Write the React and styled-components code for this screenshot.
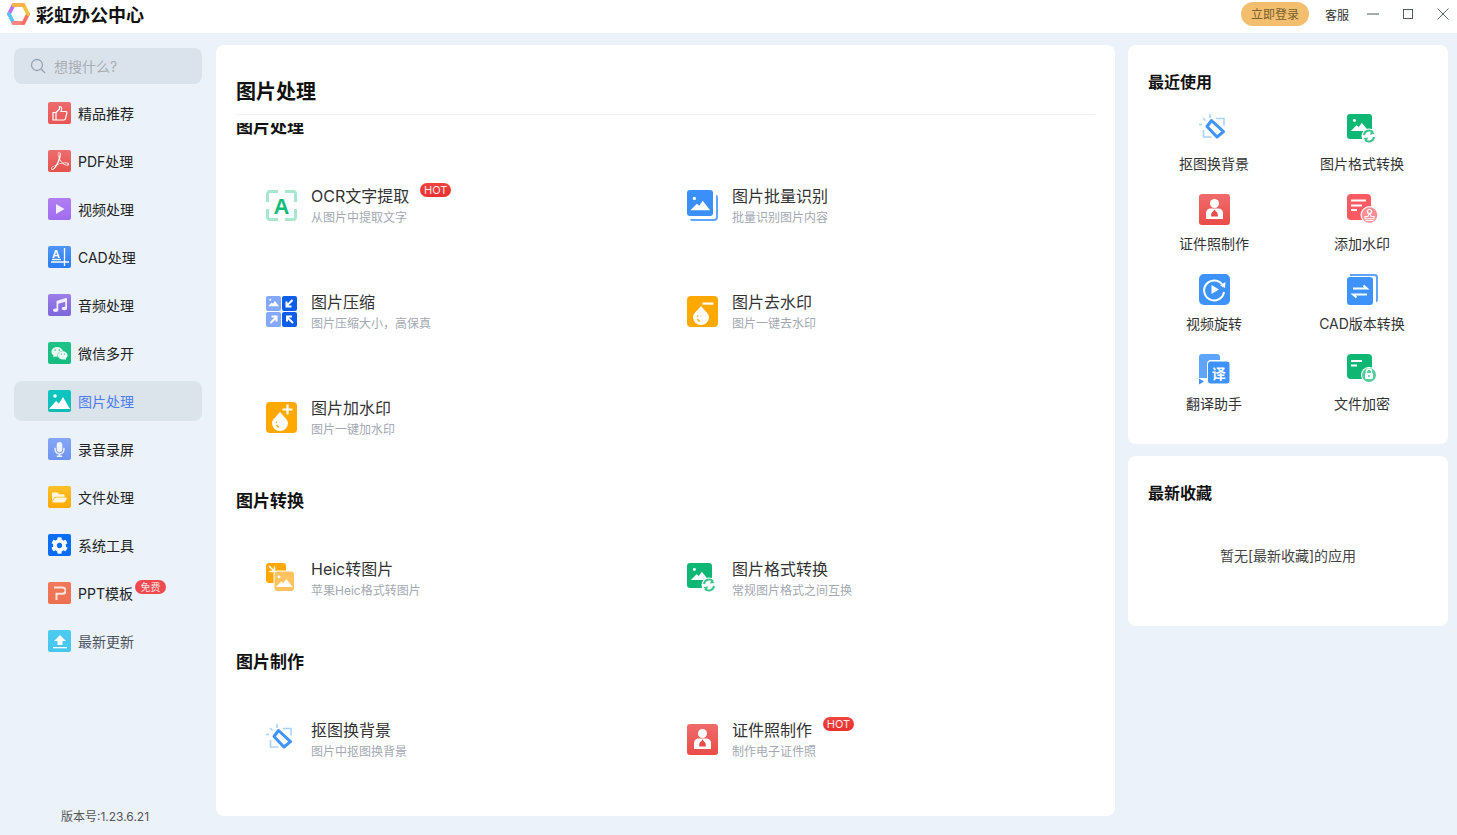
import React from 'react';
import styled, { createGlobalStyle } from 'styled-components';
import { FaWeixin, FaMusic, FaMicrophone, FaFolderOpen, FaCog } from 'react-icons/fa';
import { SiAdobeacrobatreader } from 'react-icons/si';

const FONT = `Inter, "Noto Sans CJK SC", "Microsoft YaHei", "Noto Sans", sans-serif`;

const Global = createGlobalStyle`
  html, body { margin: 0; padding: 0; background: #ebf2fa; }
  * { box-sizing: border-box; }
  body { font-family: ${FONT}; }
`;

const Page = styled.div`
  width: 1457px; height: 835px; display: flex; flex-direction: column; overflow: hidden; background: #ebf2fa;
`;
const TitleBar = styled.header`
  height: 33px; background: #fff; display: flex; align-items: center; padding: 0 0 6px 7px; flex: none;
`;
const LogoText = styled.div`
  margin: 4px 0 0 6px; font-size: 18px; font-weight: 700; color: #111; line-height: 27px;
`;
const TitleRight = styled.div`
  margin-left: auto; display: flex; align-items: center; height: 100%;
`;
const Login = styled.button`
  width: 68px; height: 24px; margin-top: 1px; border: 0; border-radius: 12px; background: #f3be6d; color: #77612f;
  font: 12px/22px ${FONT}; padding: 2px 0 0;
`;
const Service = styled.span`
  margin: 4px 0 0 16px; font-size: 12px; color: #333; line-height: 20px;
`;
const WinBtn = styled.div`
  width: 12px; height: 12px; display: flex; margin-left: ${p => p.$ml}px; margin-right: ${p => p.$mr || 0}px;
  svg { width: 12px; height: 12px; display: block; }
`;

const Body = styled.div`
  flex: 1; display: flex; min-height: 0; padding-left: 14px;
`;
const Sidebar = styled.aside`
  width: 188px; flex: none; display: flex; flex-direction: column; padding-top: 15px;
`;
const Search = styled.div`
  height: 36px; background: #dae3ec; border-radius: 8px; display: flex; align-items: center; padding-left: 16px; gap: 8px;
  color: #a9adb3; font-size: 14px; margin-bottom: 5px;
  svg { display: block; }
`;
const Nav = styled.nav`
  display: flex; flex-direction: column;
`;
const NavItem = styled.div`
  height: 40px; margin: 4px 0; border-radius: 8px; display: flex; align-items: center; padding-left: 34px; gap: 7px;
  background: ${p => (p.$active ? '#dbe3eb' : 'transparent')};
  color: ${p => (p.$active ? '#4d7cf0' : p.$muted ? '#4d5560' : '#222')};
  font-size: 14px; line-height: 20px;
  > span { padding-top: 2px; }
`;
const SideTile = styled.div`
  width: 23px; height: 22px; border-radius: 2px; flex: none; background: linear-gradient(180deg, ${p => p.$from}, ${p => p.$to});
  display: flex; align-items: center; justify-content: center; color: #fff;
  svg { display: block; }
`;
const FreeBadge = styled.em`
  font-style: normal; width: 31px; height: 14px; border-radius: 7px; background: #ee4a4f; color: #fde3e3; font-size: 10px;
  line-height: 14px; text-align: center; margin: -12px 0 0 -5px;
`;
const Version = styled.div`
  margin-top: auto; text-align: center; font-size: 12px; line-height: 20px; color: #555; padding: 0 6px 8px 0;
`;

const Main = styled.main`
  width: 899px; height: 771px; margin: 12px 0 0 14px; background: #fff; border-radius: 8px; padding: 0 20px; display: flex; flex-direction: column; flex: none;
`;
const MainHeader = styled.div`
  height: 70px; flex: none; border-bottom: 1px solid #f0f0f0; padding-top: 32px; font-size: 20px; line-height: 30px; font-weight: 700; color: #111;
`;
const Scroller = styled.div`
  margin-top: 8px; flex: 1; overflow: hidden; min-height: 0;
`;
const ScrollInner = styled.div`
  margin-top: -26px;
`;
const SectionTitle = styled.h3`
  margin: 0; height: ${p => (p.$first ? 56 : 55)}px; display: flex; align-items: center; padding-top: ${p => (p.$first ? 3 : 4)}px;
  font-size: 17px; font-weight: 700; color: #111; line-height: 24px;
`;
const ItemGrid = styled.div`
  display: grid; grid-template-columns: 421px 421px; grid-auto-rows: 106px; padding-left: 30px;
`;
const IconBox = styled.div`
  width: 31px; height: 31px; flex: none;
  svg { display: block; width: 31px; height: 31px; overflow: visible; }
`;
const Item = styled.div`
  display: flex; align-items: center; gap: 14px;
  ${IconBox} { margin-top: -1px; }
`;
const ItemText = styled.div`
  margin-top: 2px;
`;
const ItemTitleRow = styled.div`
  display: flex; align-items: flex-start;
`;
const ItemTitle = styled.div`
  font-size: 16px; line-height: 20px; color: #333;
`;
const HotBadge = styled.em`
  font-style: normal; width: 31px; height: 14px; border-radius: 7px; background: linear-gradient(180deg, #f0443f, #e8302f); color: #ffe9e9;
  font: 11px/14px ${FONT}; text-align: center; margin: -3px 0 0 11px;
`;
const ItemSub = styled.div`
  font-size: 12px; line-height: 20px; margin-top: 2px; color: #a3a9b3;
`;

const Right = styled.aside`
  width: 320px; margin: 12px 0 0 13px; flex: none; display: flex; flex-direction: column; gap: 12px;
`;
const Card = styled.section`
  background: #fff; border-radius: 8px; padding: 25px 12px 10px; height: ${p => p.$h}px;
`;
const CardTitle = styled.h3`
  margin: 0; padding-left: 8px; font-size: 16px; font-weight: 700; line-height: 24px; color: #111;
`;
const RecentGrid = styled.div`
  margin-top: 20px; display: grid; grid-template-columns: 1fr 1fr; grid-auto-rows: 80px;
`;
const RecentCell = styled.div`
  display: flex; flex-direction: column; align-items: center; gap: 9px; font-size: 14px; line-height: 20px; color: #333;
`;
const Empty = styled.div`
  margin-top: 41px; text-align: center; font-size: 14px; line-height: 20px; color: #444;
`;

/* Drawings */
const Logo = () => (
  <svg width="23" height="22" viewBox="0 0 23 22" fill="none" strokeWidth="3.800" strokeLinecap="round">
    <path d="M6.500 2 2 11" stroke="#c46ee6" />
    <path d="M2 11 6.500 20" stroke="#5cc0f0" />
    <path d="M6.500 20H16.500" stroke="#f5857f" />
    <path d="M16.500 20 21 11" stroke="#f56f62" />
    <path d="M21 11 16.500 2" stroke="#f9c33f" />
    <path d="M6.500 2H16.500" stroke="#f7b24d" />
  </svg>
);

const Mountain = ({ x = 0, y = 0, s = 1, fill = '#fff' }) => (
  <g transform={`translate(${x} ${y}) scale(${s})`} fill={fill}>
    <circle cx="5" cy="4" r="1.700" />
    <path d="M1 16 7.500 9.500 10 11.500 13.500 6.500 21 16z" />
  </g>
);
const Drop = () => (
  <g>
    <path d="M14 10c4.300 5 8 8 8 11a8 8 0 0 1-16 0c0-3 3.700-6 8-11z" fill="#fff" />
    <path d="M10.500 19.500v1.500M10.500 23c.4 1.200 1.200 2 2.500 2.500" stroke="#ffa800" strokeWidth="1.300" fill="none" />
  </g>
);
const Sync = ({ cx = 22, cy = 22 }) => (
  <g>
    <circle cx={cx} cy={cy} r="7.500" fill="#fff" />
    <path d={`M${cx - 5} ${cy - 1}a5.200 5.200 0 0 1 9-2.800`} stroke="#3dc48c" strokeWidth="2" fill="none" />
    <path d={`M${cx + 2.500} ${cy - 6}l3 4-4.500 .5z`} fill="#3dc48c" />
    <path d={`M${cx + 5} ${cy + 1}a5.200 5.200 0 0 1-9 2.800`} stroke="#3dc48c" strokeWidth="2" fill="none" />
    <path d={`M${cx - 2.500} ${cy + 6}l-3-4 4.500-.5z`} fill="#3dc48c" />
  </g>
);

const OcrIcon = () => (
  <svg viewBox="0 0 31 31">
    <path d="M1.500 12V4A2.500 2.500 0 0 1 4 1.500h8M19 1.500h8A2.500 2.500 0 0 1 29.500 4v8M29.500 19v8a2.500 2.500 0 0 1-2.500 2.500h-8M12 29.500H4A2.500 2.500 0 0 1 1.500 27v-8" fill="none" stroke="#a6e7cd" strokeWidth="3" />
    <text x="15.500" y="23.500" textAnchor="middle" fontFamily="'Liberation Sans',sans-serif" fontWeight="700" fontSize="22" fill="#12bd7c">A</text>
  </svg>
);
const CompressIcon = () => (
  <svg viewBox="0 0 31 31">
    <rect x="0" y="0" width="15" height="15" rx="2" fill="#84a8fb" />
    <Mountain x="1.500" y="1.500" s=".55" />
    <rect x="16" y="0" width="15" height="15" rx="2" fill="#0f5eea" />
    <path d="M26.500 4 20.500 10M20.500 5.500V10.500H25.500" stroke="#fff" strokeWidth="2" fill="none" />
    <rect x="0" y="16" width="15" height="15" rx="2" fill="#84a8fb" />
    <path d="M4.500 27 10.500 21M5.500 20.500H10.500V25.500" stroke="#fff" strokeWidth="2" fill="none" />
    <rect x="16" y="16" width="15" height="15" rx="2" fill="#0f5eea" />
    <path d="M27 27 21 21M21 25.500V20.500H26" stroke="#fff" strokeWidth="2" fill="none" />
  </svg>
);
const BatchIcon = () => (
  <svg viewBox="0 0 31 31">
    <path d="M29 5a2 2 0 0 1 2 2v20a4 4 0 0 1-4 4H5a2 2 0 0 1-2-2h24a2 2 0 0 0 2-2z" fill="#5ea5fb" />
    <rect x="0" y="0" width="26" height="26" rx="3" fill="#3a90f8" />
    <Mountain x="2.500" y="4.500" s=".98" />
  </svg>
);
const TileOrange = ({ children }) => (
  <svg viewBox="0 0 31 31">
    <rect width="31" height="31" rx="4" fill="#ffa800" />
    {children}
  </svg>
);
const RemoveWmIcon = () => (
  <TileOrange><Drop /><rect x="15.500" y="6.500" width="11" height="2.200" fill="#fff" /></TileOrange>
);
const AddWmIcon = () => (
  <TileOrange><Drop /><path d="M16.500 7.500h10M21.500 2.500v10" stroke="#fff" strokeWidth="2.200" /></TileOrange>
);
const HeicIcon = () => (
  <svg viewBox="0 0 31 31">
    <rect x="0" y="0" width="20" height="20" rx="3" fill="#ffa800" />
    <path d="M3 3 8.500 8.500M3.500 8.500H8.500V3.500" stroke="#fff" strokeWidth="1.500" fill="none" />
    <rect x="7.500" y="7.500" width="21" height="21" rx="3.500" fill="#fff" />
    <rect x="8.500" y="8.500" width="19.500" height="19.500" rx="3" fill="#ffc25e" />
    <Mountain x="8.800" y="10.500" s=".85" />
  </svg>
);
const FormatIcon = () => (
  <svg viewBox="0 0 31 31">
    <rect x="0" y="0" width="25" height="25" rx="3" fill="#0fb774" />
    <Mountain x="3" y="3" s=".88" />
    <Sync />
  </svg>
);
const CutoutIcon = () => (
  <svg viewBox="0 0 31 31">
    <path d="M11 0v4M0 10.500h3M4 4l2.500 2.500" stroke="#a9d2fe" strokeWidth="1.600" fill="none" />
    <path d="M17 4.500h8v7M4.500 16v7h8" stroke="#a9d2fe" strokeWidth="1.600" fill="none" />
    <path d="M12.500 6.500 24.500 17.700 18 23 8 12.500z" fill="none" stroke="#3f94fb" strokeWidth="3" strokeLinejoin="round" />
  </svg>
);
const IdIcon = () => (
  <svg viewBox="0 0 31 31">
    <defs><linearGradient id="idg" x1="0" y1="0" x2="0" y2="1"><stop offset="0" stopColor="#ef6b6b" /><stop offset="1" stopColor="#ea4d48" /></linearGradient></defs>
    <rect width="31" height="31" rx="3" fill="url(#idg)" />
    <circle cx="15.500" cy="9.500" r="4.500" fill="#fff" />
    <path d="M7 25V19a4.500 4.500 0 0 1 4.500-4.500h8A4.500 4.500 0 0 1 24 19v6z" fill="#fff" />
    <path d="M15.500 15.500l1.500 2a3.500 3.500 0 0 1 1.800 3.200v1.800h-6.600v-1.800a3.500 3.500 0 0 1 1.800-3.200z" fill="#ea4d48" />
  </svg>
);
const WatermarkIcon = () => (
  <svg viewBox="0 0 31 31">
    <rect width="24" height="26" rx="4" fill="#fb5a63" />
    <path d="M4 6.500h15M4 11.500h11M4 16h6" stroke="#fff" strokeWidth="1.800" />
    <circle cx="22.500" cy="21" r="9" fill="#fff" />
    <circle cx="22.500" cy="21" r="7.800" fill="#fc8e94" />
    <circle cx="22.500" cy="17.500" r="2" fill="none" stroke="#fff" strokeWidth="1.200" />
    <path d="M18 24.800h9v-2.300h-3l-1-2.500h-1l-1 2.500h-3zM18.500 26.500h8" fill="none" stroke="#fff" strokeWidth="1.100" />
  </svg>
);
const VideoRotateIcon = () => (
  <svg viewBox="0 0 31 31">
    <rect width="31" height="31" rx="5" fill="#3d93fb" />
    <path d="M24.500 13a10 10 0 1 0 .5 5" fill="none" stroke="#fff" strokeWidth="2" />
    <path d="M21 11.500 26 14l.5-6z" fill="#fff" />
    <path d="M12.500 11 20 15.500 12.500 20z" fill="#fff" />
  </svg>
);
const CadConvertIcon = () => (
  <svg viewBox="0 0 31 31">
    <path d="M3 0h25a3 3 0 0 1 3 3v23a3 3 0 0 1-2 2.500V3.500A1.500 1.500 0 0 0 27.500 2H3z" fill="#5ea5fb" />
    <rect x="6" y="0" width="23" height="2" fill="#5ea5fb" />
    <rect x="0" y="3" width="26" height="28" rx="3" fill="#3d93fb" />
    <path d="M6 14.500h14l-3.500-3M20 20.500H6l3.500 3" fill="none" stroke="#fff" strokeWidth="1.900" />
  </svg>
);
const TranslateIcon = () => (
  <svg viewBox="0 0 31 31">
    <path d="M3 0h15a3 3 0 0 1 3 3v3H12a4 4 0 0 0-4 4v14H0V3a3 3 0 0 1 3-3z" fill="#5ea5fb" />
    <path d="M0 24.500 5 27.500 0 30.500z" fill="#3d93fb" />
    <rect x="8.500" y="7" width="22.500" height="23" rx="3" fill="#3d93fb" stroke="#fff" strokeWidth="1" />
    <text x="19.800" y="24.500" textAnchor="middle" fontFamily="'Noto Sans CJK SC',sans-serif" fontSize="14" fontWeight="700" fill="#fff">译</text>
  </svg>
);
const EncryptIcon = () => (
  <svg viewBox="0 0 31 31">
    <rect width="25" height="25" rx="4" fill="#0fb774" />
    <path d="M4 7h11M4 11.500h6" stroke="#fff" strokeWidth="1.900" />
    <circle cx="22" cy="21" r="8" fill="#fff" />
    <circle cx="22" cy="21" r="7" fill="#54cd9c" />
    <path d="M19.500 19v-1.500a2.500 2.500 0 0 1 5 0V19" stroke="#fff" strokeWidth="1.300" fill="none" />
    <rect x="18" y="19" width="8" height="6" rx="1" fill="#fff" />
    <circle cx="22" cy="22" r="1" fill="#54cd9c" />
  </svg>
);

const sideIcons = {
  thumb: <svg width="16" height="16" viewBox="0 0 16 16" fill="none" stroke="#fff" strokeWidth="1.200"><path d="M1 7.500h3v7.500H1zM4 7.500 7.500 4V1.500c1.800 0 2.500 1.500 2 3L9 6.500h4.700c.8 0 1.300.7 1.100 1.500l-1.300 5.700c-.2.800-.8 1.300-1.600 1.300H4" /></svg>,
  pdf: <SiAdobeacrobatreader size={18} />,
  play: <svg width="10" height="10" viewBox="0 0 10 10"><path d="M1 0 9.500 5 1 10z" fill="#f4ecff" /></svg>,
  cad: <svg width="19" height="18" viewBox="0 0 19 18"><text x="6" y="10" textAnchor="middle" fontFamily="'Liberation Sans',sans-serif" fontSize="11" fontWeight="700" fill="#fff">A</text><path d="M14.500 0v18M1 14h18" stroke="#fff" strokeWidth="1.300" /><path d="M2 11.500h9" stroke="#fff" strokeWidth="1.300" /></svg>,
  music: <FaMusic size={14} color="#f1ecff" />,
  wechat: <FaWeixin size={17} color="#eafaf3" />,
  image: <svg width="21" height="18" viewBox="0 0 21 18"><circle cx="6" cy="4" r="1.800" fill="#fff" /><path d="M0 17 7 9l3 2.500L14 5l7 12z" fill="#fff" /></svg>,
  mic: <FaMicrophone size={15} color="#eef3ff" />,
  folder: <FaFolderOpen size={15} color="#fff5dc" />,
  gear: <FaCog size={17} color="#fff" />,
  ppt: <svg width="12" height="14" viewBox="0 0 12 14" fill="none" stroke="#fbe4dd" strokeWidth="2"><path d="M0 1.500h8.500a2.700 2.700 0 0 1 0 6.200H2.500V14" /></svg>,
  upload: <svg width="14" height="15" viewBox="0 0 14 15" fill="#fff"><path d="M7 1 13 7H9.500v4h-5V7H1z" /><rect x="0" y="13" width="14" height="1.300" /></svg>,
};

const navItems = [
  ['精品推荐', 'thumb', '#ee6d6f', '#e95555'],
  ['PDF处理', 'pdf', '#ee6d6f', '#e4524d'],
  ['视频处理', 'play', '#b07ef2', '#a06cf0'],
  ['CAD处理', 'cad', '#4f96f7', '#2a7df2'],
  ['音频处理', 'music', '#9c7fe9', '#7c66da'],
  ['微信多开', 'wechat', '#1fc287', '#16bb7f'],
  ['图片处理', 'image', '#0dc7c2', '#0fbcb4', true],
  ['录音录屏', 'mic', '#86a7f7', '#6e93ef'],
  ['文件处理', 'folder', '#ffc02a', '#ffa900'],
  ['系统工具', 'gear', '#0b6ffb', '#0a6bf7'],
  ['PPT模板', 'ppt', '#f2785a', '#ec6f50', false, true],
  ['最新更新', 'upload', '#4dcbf0', '#46c6ec', false, false, true],
];

const sections = [
  { title: '图片处理', items: [
    ['OCR文字提取', '从图片中提取文字', OcrIcon, true],
    ['图片批量识别', '批量识别图片内容', BatchIcon],
    ['图片压缩', '图片压缩大小，高保真', CompressIcon],
    ['图片去水印', '图片一键去水印', RemoveWmIcon],
    ['图片加水印', '图片一键加水印', AddWmIcon],
  ] },
  { title: '图片转换', items: [
    ['Heic转图片', '苹果Heic格式转图片', HeicIcon],
    ['图片格式转换', '常规图片格式之间互换', FormatIcon],
  ] },
  { title: '图片制作', items: [
    ['抠图换背景', '图片中抠图换背景', CutoutIcon],
    ['证件照制作', '制作电子证件照', IdIcon, true],
  ] },
];

const recent = [
  ['抠图换背景', CutoutIcon], ['图片格式转换', FormatIcon], ['证件照制作', IdIcon], ['添加水印', WatermarkIcon],
  ['视频旋转', VideoRotateIcon], ['CAD版本转换', CadConvertIcon], ['翻译助手', TranslateIcon], ['文件加密', EncryptIcon],
];

export default function App() {
  return (
    <Page>
      <Global />
      <TitleBar>
        <Logo />
        <LogoText>彩虹办公中心</LogoText>
        <TitleRight>
          <Login>立即登录</Login>
          <Service>客服</Service>
          <WinBtn $ml={18}><svg viewBox="0 0 12 12"><path d="M0 6h12" stroke="#4d5866" strokeWidth="1" /></svg></WinBtn>
          <WinBtn $ml={23}><svg viewBox="0 0 12 12"><rect x="1.500" y="1.500" width="9" height="9" fill="none" stroke="#4d5866" strokeWidth="1" /></svg></WinBtn>
          <WinBtn $ml={23} $mr={8}><svg viewBox="0 0 12 12"><path d="M.5.5l11 11M11.500.5l-11 11" stroke="#5d6775" strokeWidth="1" /></svg></WinBtn>
        </TitleRight>
      </TitleBar>
      <Body>
        <Sidebar>
          <Search>
            <svg width="16" height="16" viewBox="0 0 16 16" fill="none" stroke="#98a3b3" strokeWidth="1.300"><circle cx="7" cy="7" r="5.500" /><path d="M11 11l4 4" /></svg>
            想搜什么?
          </Search>
          <Nav>
            {navItems.map(([label, icon, from, to, active, free, muted]) => (
              <NavItem key={label} $active={active} $muted={muted}>
                <SideTile $from={from} $to={to}>{sideIcons[icon]}</SideTile>
                <span>{label}</span>
                {free && <FreeBadge>免费</FreeBadge>}
              </NavItem>
            ))}
          </Nav>
          <Version>版本号:1.23.6.21</Version>
        </Sidebar>
        <Main>
          <MainHeader>图片处理</MainHeader>
          <Scroller>
            <ScrollInner>
              {sections.map((s, i) => (
                <div key={s.title}>
                  <SectionTitle $first={i === 0}>{s.title}</SectionTitle>
                  <ItemGrid>
                    {s.items.map(([title, sub, Icon, hot]) => (
                      <Item key={title}>
                        <IconBox><Icon /></IconBox>
                        <ItemText>
                          <ItemTitleRow>
                            <ItemTitle>{title}</ItemTitle>
                            {hot && <HotBadge>HOT</HotBadge>}
                          </ItemTitleRow>
                          <ItemSub>{sub}</ItemSub>
                        </ItemText>
                      </Item>
                    ))}
                  </ItemGrid>
                </div>
              ))}
            </ScrollInner>
          </Scroller>
        </Main>
        <Right>
          <Card $h={399}>
            <CardTitle>最近使用</CardTitle>
            <RecentGrid>
              {recent.map(([label, Icon]) => (
                <RecentCell key={label}>
                  <IconBox><Icon /></IconBox>
                  <span>{label}</span>
                </RecentCell>
              ))}
            </RecentGrid>
          </Card>
          <Card $h={170}>
            <CardTitle>最新收藏</CardTitle>
            <Empty>暂无[最新收藏]的应用</Empty>
          </Card>
        </Right>
      </Body>
    </Page>
  );
}
